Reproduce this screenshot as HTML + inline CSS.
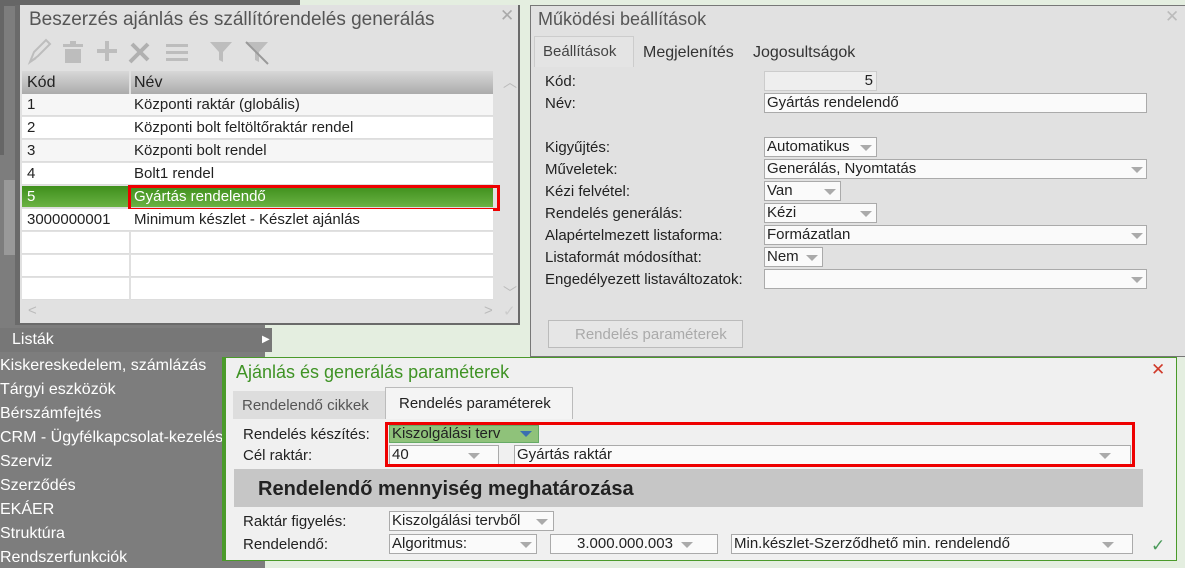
<!DOCTYPE html>
<html><head><meta charset="utf-8"><style>
*{box-sizing:border-box;margin:0;padding:0}
body{width:1185px;height:568px;overflow:hidden;position:relative;background:#e4eee0;font-family:"Liberation Sans",sans-serif;font-size:15px;color:#222}
.a{position:absolute;white-space:nowrap}
.side{left:0;top:0;width:265px;height:568px;background:#7d7d7d}
.m{color:#fff;font-size:16px;left:0}
.dlg{background:#e1e1e1}
.in{position:absolute;background:#fafafa;border:1px solid #aaa;height:20px;font-size:15px;line-height:18px;padding-left:2px;white-space:nowrap}
.arr{position:absolute;top:7px;width:0;height:0;border-left:6px solid transparent;border-right:6px solid transparent;border-top:6px solid #aaa}
.lbl{font-size:15px;color:#222}
.row{position:absolute;left:22px;width:471px;height:22px;background:#fff;border-bottom:1px solid #ddd}
.row span{position:absolute;top:2px;font-size:15px}
</style></head><body>
<div class="a side"></div>
<div class="a" style="left:0;top:0;width:300px;height:6px;background:#666"></div>
<div class="a" style="left:0;top:0;width:4px;height:155px;background:#666"></div>
<div class="a" style="left:4px;top:180px;width:12px;height:75px;background:#999"></div>
<!-- dialog 1 -->
<div class="a" style="left:15px;top:5px;width:505px;height:320px;background:#6a6a6a"></div>
<div class="a dlg" style="left:20px;top:5px;width:498px;height:318px"></div>
<div class="a" style="left:29px;top:9px;font-size:19px;color:#555">Beszerzés ajánlás és szállítórendelés generálás</div>
<div class="a" style="left:500px;top:6px;font-size:17px;color:#aaa">✕</div>
<svg class="a" style="left:26px;top:38px" width="250" height="28" fill="#bdbdbd">
<path d="M4 24 L8 14 L20 2 L24 6 L12 18 Z M4 24 L10 20" stroke="#bdbdbd" stroke-width="2" fill="none"/>
<rect x="37" y="6" width="20" height="3"/><rect x="44" y="3" width="6" height="3"/><rect x="39" y="11" width="16" height="14"/>
<rect x="71" y="11" width="20" height="4"/><rect x="79" y="3" width="4" height="20"/>
<path d="M104 24 L122 6 M106 6 L122 22" stroke="#b0b0b0" stroke-width="4"/>
<rect x="140" y="6" width="22" height="3"/><rect x="140" y="13" width="22" height="3"/><rect x="140" y="20" width="22" height="3"/>
<path d="M184 4 H206 L197 14 V24 L193 22 V14 Z"/><path d="M220 4 H242 L233 14 V24 L229 22 V14 Z"/><path d="M220 4 L242 26" stroke="#999" stroke-width="2"/>
</svg>
<div class="a" style="left:22px;top:71px;width:471px;height:23px;background:linear-gradient(#d8d8d8,#ababab)"></div>
<div class="a" style="left:129px;top:71px;width:2px;height:229px;background:#e0e0e0"></div>
<div class="a" style="left:27px;top:74px;font-size:16px">Kód</div>
<div class="a" style="left:134px;top:74px;font-size:16px">Név</div>
<div class="row" style="top:94px;background:#f6f6f6"><span style="left:5px">1</span><span style="left:112px">Központi raktár (globális)</span></div>
<div class="row" style="top:117px"><span style="left:5px">2</span><span style="left:112px">Központi bolt feltöltőraktár rendel</span></div>
<div class="row" style="top:140px;background:#f6f6f6"><span style="left:5px">3</span><span style="left:112px">Központi bolt rendel</span></div>
<div class="row" style="top:163px"><span style="left:5px">4</span><span style="left:112px">Bolt1 rendel</span></div>
<div class="row" style="top:186px;background:linear-gradient(#3f8f1c,#6ab243);color:#fff"><span style="left:5px">5</span><span style="left:112px">Gyártás rendelendő</span></div>
<div class="a" style="left:128px;top:185px;width:372px;height:26px;border:3px solid #e00"></div>
<div class="row" style="top:209px"><span style="left:5px">3000000001</span><span style="left:112px">Minimum készlet - Készlet ajánlás</span></div>
<div class="row" style="top:232px"></div><div class="row" style="top:255px"></div><div class="row" style="top:278px;height:22px"></div>
<div class="a" style="left:129px;top:232px;width:2px;height:68px;background:#e0e0e0"></div>
<div class="a" style="left:503px;top:72px;color:#bbb;font-size:14px">︿</div>
<div class="a" style="left:503px;top:283px;color:#bbb;font-size:14px">﹀</div>
<div class="a" style="left:28px;top:302px;color:#bbb">&lt;</div>
<div class="a" style="left:484px;top:302px;color:#bbb">&gt;</div>
<div class="a" style="left:503px;top:302px;color:#ccc">✓</div>
<!-- menu -->
<div class="a" style="left:0;top:328px;width:272px;height:24px;background:#777"></div>
<div class="a m" style="left:12px;top:331px">Listák</div>
<div class="a" style="left:262px;top:334px;color:#fff;font-size:10px">▶</div>
<div class="a m" style="top:357px">Kiskereskedelem, számlázás</div>
<div class="a m" style="top:381px">Tárgyi eszközök</div>
<div class="a m" style="top:405px">Bérszámfejtés</div>
<div class="a m" style="top:429px">CRM - Ügyfélkapcsolat-kezelés</div>
<div class="a m" style="top:453px">Szerviz</div>
<div class="a m" style="top:477px">Szerződés</div>
<div class="a m" style="top:501px">EKÁER</div>
<div class="a m" style="top:525px">Struktúra</div>
<div class="a m" style="top:549px">Rendszerfunkciók</div>
<!-- dialog 2 -->
<div class="a dlg" style="left:530px;top:5px;width:655px;height:352px;border:1px solid #777;border-right:none"></div>
<div class="a" style="left:538px;top:9px;font-size:18px;color:#555">Működési beállítások</div>
<div class="a" style="left:1165px;top:7px;font-size:17px;color:#bbb">✕</div>
<div class="a" style="left:534px;top:36px;width:100px;height:31px;background:#e4e4e4;border:1px solid #ccc;border-bottom:none"></div>
<div class="a" style="left:543px;top:43px;color:#444;font-size:15px">Beállítások</div>
<div class="a" style="left:643px;top:44px;color:#333;font-size:16px">Megjelenítés</div>
<div class="a" style="left:753px;top:44px;color:#333;font-size:16px">Jogosultságok</div>
<div class="a lbl" style="left:545px;top:73px">Kód:</div>
<div class="a lbl" style="left:545px;top:95px">Név:</div>
<div class="a lbl" style="left:545px;top:139px">Kigyűjtés:</div>
<div class="a lbl" style="left:545px;top:161px">Műveletek:</div>
<div class="a lbl" style="left:545px;top:183px">Kézi felvétel:</div>
<div class="a lbl" style="left:545px;top:205px">Rendelés generálás:</div>
<div class="a lbl" style="left:545px;top:227px">Alapértelmezett listaforma:</div>
<div class="a lbl" style="left:545px;top:249px">Listaformát módosíthat:</div>
<div class="a lbl" style="left:545px;top:271px">Engedélyezett listaváltozatok:</div>
<div class="in" style="left:764px;top:71px;width:113px;background:#eee;border-color:#ccc;text-align:right;padding-right:3px">5</div>
<div class="in" style="left:764px;top:93px;width:383px">Gyártás rendelendő</div>
<div class="in" style="left:764px;top:137px;width:113px">Automatikus<i class="arr" style="left:95px"></i></div>
<div class="in" style="left:764px;top:159px;width:383px">Generálás, Nyomtatás<i class="arr" style="left:366px"></i></div>
<div class="in" style="left:764px;top:181px;width:77px">Van<i class="arr" style="left:59px"></i></div>
<div class="in" style="left:764px;top:203px;width:113px">Kézi<i class="arr" style="left:95px"></i></div>
<div class="in" style="left:764px;top:225px;width:383px">Formázatlan<i class="arr" style="left:366px"></i></div>
<div class="in" style="left:764px;top:247px;width:59px">Nem<i class="arr" style="left:41px"></i></div>
<div class="in" style="left:764px;top:269px;width:383px"><i class="arr" style="left:366px"></i></div>
<div class="a" style="left:548px;top:320px;width:195px;height:28px;border:1px solid #bbb;background:#e6e6e6;color:#aaa;font-size:15px;padding:5px 0 0 26px">Rendelés paraméterek</div>
<!-- dialog 3 -->
<div class="a" style="left:222px;top:357px;width:955px;height:204px;background:#f0f0f0;border:1px solid #4a9a2a;border-left:4px solid #4a9a2a"></div>
<div class="a" style="left:236px;top:362px;font-size:18px;color:#3f9325">Ajánlás és generálás paraméterek</div>
<div class="a" style="left:1151px;top:360px;font-size:17px;color:#d03a2a">✕</div>
<div class="a" style="left:233px;top:391px;width:152px;height:28px;background:#ddd"></div>
<div class="a" style="left:242px;top:397px;color:#555">Rendelendő cikkek</div>
<div class="a" style="left:385px;top:387px;width:188px;height:32px;background:#f4f4f4;border:1px solid #bbb;border-bottom:none"></div>
<div class="a" style="left:399px;top:395px;color:#222">Rendelés paraméterek</div>
<div class="a lbl" style="left:243px;top:426px">Rendelés készítés:</div>
<div class="a lbl" style="left:243px;top:447px">Cél raktár:</div>
<div class="in" style="left:389px;top:425px;width:150px;height:18px;background:#8fc27a;border-color:#6a6;line-height:16px">Kiszolgálási terv<i class="arr" style="left:130px;top:5px;border-top-color:#3a6fb0"></i></div>
<div class="in" style="left:389px;top:445px;width:110px">40<i class="arr" style="left:78px"></i></div>
<div class="in" style="left:514px;top:445px;width:617px">Gyártás raktár<i class="arr" style="left:584px"></i></div>
<div class="a" style="left:385px;top:422px;width:750px;height:45px;border:3px solid #e00"></div>
<div class="a" style="left:234px;top:469px;width:909px;height:38px;background:#c6c6c6"></div>
<div class="a" style="left:258px;top:478px;font-size:20px;font-weight:bold;color:#222">Rendelendő mennyiség meghatározása</div>
<div class="a lbl" style="left:243px;top:513px">Raktár figyelés:</div>
<div class="a lbl" style="left:243px;top:536px">Rendelendő:</div>
<div class="in" style="left:389px;top:511px;width:165px">Kiszolgálási tervből<i class="arr" style="left:146px"></i></div>
<div class="in" style="left:389px;top:534px;width:148px">Algoritmus:<i class="arr" style="left:130px"></i></div>
<div class="in" style="left:550px;top:534px;width:168px;padding-left:26px">3.000.000.003<i class="arr" style="left:130px"></i></div>
<div class="in" style="left:731px;top:534px;width:402px">Min.készlet-Szerződhető min. rendelendő<i class="arr" style="left:370px"></i></div>
<div class="a" style="left:1151px;top:536px;color:#4a9a5a;font-size:17px">✓</div>
</body></html>
